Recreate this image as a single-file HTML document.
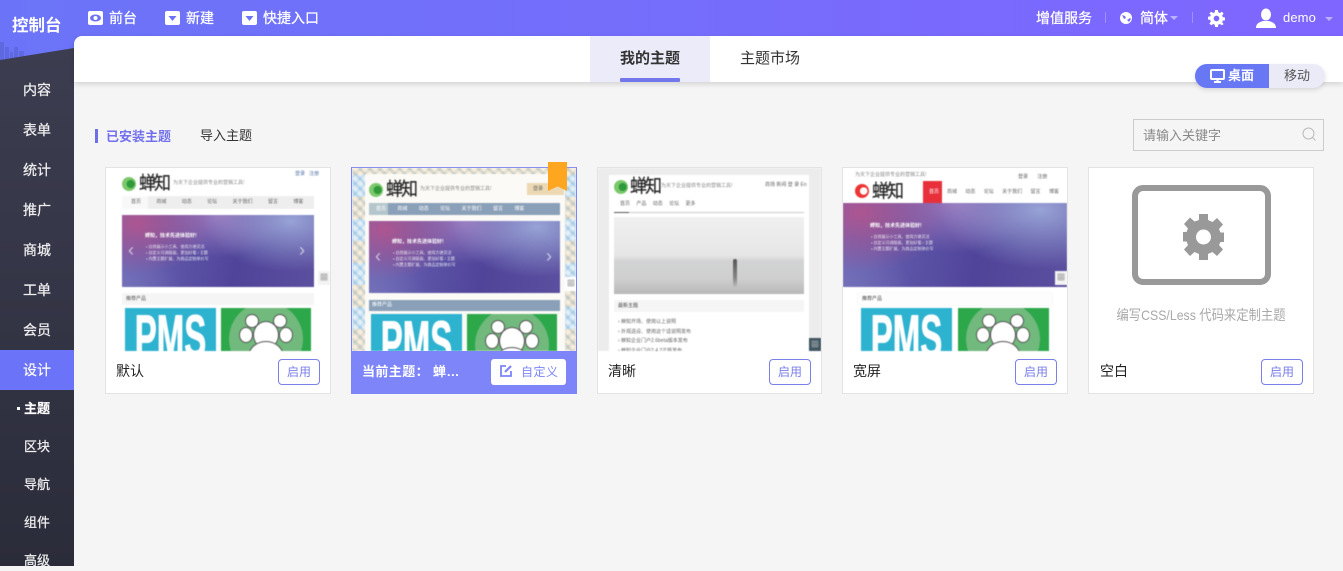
<!DOCTYPE html>
<html lang="zh"><head><meta charset="utf-8"><title>主题</title>
<style>
*{box-sizing:border-box}
html,body{margin:0;padding:0;width:1343px;height:566px;overflow:hidden;background:#f5f5f5;font-family:"Liberation Sans","Noto Sans CJK SC",sans-serif;color:#333}
.a{position:absolute}
.t{position:absolute;white-space:nowrap;line-height:20px}
#top{left:0;top:0;width:1343px;height:62px;background:linear-gradient(90deg,#6b74f8,#7f66ff)}
.tn{color:#fff;font-size:14px;-webkit-text-stroke:.25px #fff}
#side{left:0;top:48px;width:74px;height:518px;background:linear-gradient(180deg,#3c3d50,#2b2c3a);clip-path:polygon(0 12px,74px 0,74px 518px,0 518px)}
.m{position:absolute;left:0;width:74px;text-align:center;color:#eee;font-size:14px;line-height:20px;-webkit-text-stroke:.25px #eee}
.card{position:absolute;top:167px;width:226px;height:227px;background:#fff;border:1px solid #e3e3e3;overflow:hidden}
.shot{position:absolute;left:0;top:0;width:224px;height:183px;overflow:hidden;background:#fff;filter:blur(.5px)}
.name{position:absolute;left:10px;top:193px;font-size:14px;line-height:20px;color:#222}
.btn{position:absolute;left:172px;top:191px;width:42px;height:26px;border:1px solid #7a80e8;border-radius:4px;color:#7a80e8;font-size:12px;text-align:center;line-height:24px}
.s{position:absolute}
.ban{position:absolute;background:radial-gradient(ellipse 38% 70% at 8% 12%,#ad5690 0,rgba(173,86,144,0) 100%),radial-gradient(ellipse 45% 70% at 88% 8%,#98a3d6 0,rgba(152,163,214,0) 100%),radial-gradient(ellipse 36% 60% at 50% 0,#9a78bd 0,rgba(154,120,189,0) 100%),radial-gradient(ellipse 30% 60% at 0 100%,#7470b8 0,rgba(116,112,184,0) 100%),linear-gradient(100deg,#6a66b5,#50449a 60%,#5b4f9f)}
.ban i{position:absolute;font-style:normal;color:#fff;white-space:nowrap;font-size:4px;line-height:6px;opacity:.85}
.ban b{position:absolute;color:#fff;white-space:nowrap;font-size:5px;line-height:6px}
.logo{position:absolute;font-size:17px;color:#222;line-height:18px;white-space:nowrap;letter-spacing:-2px;-webkit-text-stroke:.2px #222;transform-origin:0 50%;transform:scaleY(1.1)}
.lc{position:absolute;width:14px;height:14px;border-radius:50%;background:radial-gradient(circle at 62% 50%,#2f9a3b 0 35%,#7cc86b 38% 100%)}
.sm{position:absolute;font-size:5px;line-height:7px;color:#888;white-space:nowrap}
.pms{position:absolute;background:#2db2cf;overflow:hidden;color:#fff;font-weight:700;font-size:60px;line-height:60px;text-align:center;-webkit-text-stroke:1px #fff}
.pms span{position:absolute;left:-30px;right:-30px;top:-1px;transform:scaleX(.55)}
.gr{position:absolute;background:#2ca84a;overflow:hidden}
.gr u{position:absolute;left:8px;top:-6px;width:74px;height:74px;border-radius:50%;background:#71b97c}
.gr p{position:absolute;margin:0;border-radius:50%;background:#fff;box-shadow:0 0 0 1px #555}
.qr{position:absolute;width:12px;height:14px;background:#f3f3f3;text-align:center;font-size:8px;line-height:14px;color:#555}
</style></head><body>

<div id="top" class="a"></div>
<div class="a" style="left:0;top:42px;width:26px;height:20px;opacity:.5">
<div class="a" style="left:0;top:0;width:4px;height:20px;background:#5560c8"></div><div class="a" style="left:5px;top:5px;width:4px;height:15px;background:#5560c8"></div><div class="a" style="left:10px;top:10px;width:3px;height:10px;background:#5560c8"></div><div class="a" style="left:14px;top:5px;width:4px;height:15px;background:#5560c8"></div><div class="a" style="left:19px;top:9px;width:5px;height:11px;background:#5560c8"></div></div>
<div id="side" class="a"></div>
<div class="t" style="left:12px;top:16px;color:#fff;font-size:16.500px;font-weight:700;width:52px">控制台</div>

<svg class="a" style="left:88px;top:11px" width="15" height="14"><rect width="15" height="14" rx="2" fill="#fff"/><ellipse cx="7.5" cy="7" rx="5.5" ry="3.5" fill="#6f72f8"/><circle cx="7.5" cy="7" r="2" fill="#fff"/></svg>
<div class="t tn" style="left:109px;top:8px">前台</div>
<svg class="a" style="left:165px;top:11px" width="15" height="14"><rect width="15" height="14" rx="2" fill="#fff"/><path d="M3.5 5h8l-4 5z" fill="#6f72f8"/></svg>
<div class="t tn" style="left:186px;top:8px">新建</div>
<svg class="a" style="left:242px;top:11px" width="15" height="14"><rect width="15" height="14" rx="2" fill="#fff"/><path d="M3.5 5h8l-4 5z" fill="#6f72f8"/></svg>
<div class="t tn" style="left:263px;top:8px">快捷入口</div>

<div class="t tn" style="left:1036px;top:8px">增值服务</div>
<div class="a" style="left:1105px;top:12px;width:1px;height:11px;background:#9b94ff"></div>
<svg class="a" style="left:1120px;top:12px" width="12" height="12"><circle cx="6" cy="6" r="6" fill="#fff"/><path d="M2 3l3 1 1 2-2 1zM7 8l3-2 1 1-2 3z" fill="#7a6cfb"/></svg>
<div class="t tn" style="left:1140px;top:8px">简体</div>
<div class="a" style="left:1170px;top:16px;border:4px solid transparent;border-top-color:#b9b3ff"></div>
<div class="a" style="left:1192px;top:12px;width:1px;height:11px;background:#9b94ff"></div>
<svg class="a" style="left:1208px;top:10px" width="17" height="17" viewBox="0 0 24 24"><path fill="#fff" fill-rule="evenodd" d="M10 0h4l.6 3.4 2.2.9L19.6 2.400 22 5l-2 2.800.9 2.200 3.100.6v3.800l-3.100.6-.9 2.200 2 2.800L19.600 21.600l-2.800-1.900-2.200.9L14 24h-4l-.6-3.400-2.200-.9-2.800 1.900L2 19l2-2.800-.9-2.200L0 13.400V9.600l3.100-.6.9-2.200L2 5l2.400-2.600 2.800 1.900 2.200-.9zM12 8a4 4 0 100 8 4 4 0 000-8z"/></svg>
<svg class="a" style="left:1256px;top:8px" width="20" height="20"><ellipse cx="10" cy="6.500" rx="5" ry="6" fill="#fff"/><path d="M0 20c0-5 4-6 7-7h6c3 1 7 2 7 7z" fill="#fff"/></svg>
<div class="t" style="left:1283px;top:8px;color:#fff;font-size:13px;letter-spacing:.1px">demo</div>
<div class="a" style="left:1325px;top:17px;border:4px solid transparent;border-top-color:#b9b3ff"></div>

<div class="a" style="left:74px;top:36px;width:1269px;height:46px;background:#fff;border-top-left-radius:8px;box-shadow:0 2px 6px rgba(0,0,0,.15)"></div>
<div class="a" style="left:590px;top:36px;width:120px;height:46px;background:#ebebf9"></div>
<div class="t" style="left:620px;top:49px;font-size:15px;font-weight:700;color:#333">我的主题</div>
<div class="a" style="left:620px;top:78px;width:60px;height:4px;background:#7277ee;border-radius:1px"></div>
<div class="t" style="left:740px;top:49px;font-size:15px;color:#333">主题市场</div>

<div class="a" style="left:1195px;top:64px;width:130px;height:24px;border-radius:12px;background:#ebebf8;box-shadow:0 2px 5px rgba(0,0,0,.12)"></div>
<div class="a" style="left:1195px;top:64px;width:74px;height:24px;border-radius:12px 0 0 12px;background:#6878f4"></div>
<svg class="a" style="left:1210px;top:69px" width="15" height="14"><rect x="1" y="1" width="13" height="9" rx="1" fill="none" stroke="#fff" stroke-width="2"/><rect x="4" y="12" width="7" height="2" fill="#fff"/><rect x="6.500" y="10" width="2" height="2" fill="#fff"/></svg>
<div class="t" style="left:1228px;top:66px;color:#fff;font-size:13px;font-weight:700">桌面</div>
<div class="t" style="left:1284px;top:66px;color:#555;font-size:13px">移动</div>

<div class="a" style="left:95px;top:129px;width:3px;height:14px;background:#6f6fe8"></div>
<div class="t" style="left:106px;top:127px;color:#7270ec;font-size:13px;font-weight:700">已安装主题</div>
<div class="t" style="left:200px;top:126px;color:#333;font-size:13px">导入主题</div>

<div class="a" style="left:1133px;top:119px;width:191px;height:32px;border:1px solid #ccc;background:#f5f5f5"></div>
<div class="t" style="left:1143px;top:126px;color:#888;font-size:13px">请输入关键字</div>
<svg class="a" style="left:1302px;top:127px" width="15" height="15"><circle cx="6.500" cy="6.500" r="5.500" fill="none" stroke="#bbb"/><path d="M10.500 10.500l3 3" stroke="#bbb"/></svg>

<!-- sidebar -->
<div class="m" style="top:80px">内容</div>
<div class="m" style="top:120px">表单</div>
<div class="m" style="top:160px">统计</div>
<div class="m" style="top:200px">推广</div>
<div class="m" style="top:240px">商城</div>
<div class="m" style="top:280px">工单</div>
<div class="m" style="top:320px">会员</div>
<div class="a" style="left:0;top:350px;width:74px;height:40px;background:#6b74f8"></div>
<div class="m" style="top:360px;color:#fff">设计</div>
<div class="a" style="left:17px;top:407px;width:3px;height:3px;background:#fff"></div>
<div class="m" style="top:399px;color:#fff;font-size:13px;font-weight:700">主题</div>
<div class="m" style="top:437px;font-size:13px">区块</div>
<div class="m" style="top:475px;font-size:13px">导航</div>
<div class="m" style="top:513px;font-size:13px">组件</div>
<div class="m" style="top:551px;font-size:13px">高级</div>

<!-- card 1 -->
<div class="card" style="left:105px"><div class="shot">
<div class="lc" style="left:16px;top:9px"></div><div class="logo" style="left:33px;top:7px">蝉知</div>
<div class="sm" style="left:67px;top:12px">为天下企业提供专业的营销工具!</div>
<div class="sm" style="left:189px;top:3px;color:#5577aa">登录 &nbsp; 注册</div>
<div class="s" style="left:16px;top:28px;width:192px;height:13px;background:#eee"></div>
<div class="s" style="left:16px;top:28px;width:26px;height:13px;background:#f8f8f8"></div>
<div class="sm" style="left:25px;top:31px;word-spacing:14px;color:#666">首页 商城 动态 论坛 关于我们 留言 博客</div>
<div class="ban" style="left:16px;top:47px;width:192px;height:72px"><b style="left:23px;top:18px">蝉知，技术先进体验好!</b><i style="left:24px;top:29px">• 自然展示小工具、使用方便灵活<br>• 自定义可调版面、更加好看 / 主题<br>• 内置主题扩展、为商品定制单价写</i><i style="left:6px;top:26px;font-size:18px;line-height:18px;opacity:.6">‹</i><i style="left:177px;top:26px;font-size:18px;line-height:18px;opacity:.6">›</i></div>
<div class="s" style="left:16px;top:125px;width:192px;height:12px;background:#f5f5f5"></div>
<div class="sm" style="left:20px;top:128px;color:#555">推荐产品</div>
<div class="pms" style="left:19px;top:140px;width:91px;height:43px"><span>PMS</span></div>
<div class="gr" style="left:115px;top:140px;width:90px;height:43px"><u></u><p style="left:25px;top:7px;width:12px;height:12px"></p><p style="left:53px;top:7px;width:12px;height:12px"></p><p style="left:19px;top:20px;width:12px;height:14px"></p><p style="left:59px;top:20px;width:12px;height:14px"></p><p style="left:33px;top:14px;width:24px;height:26px"></p><p style="left:28px;top:34px;width:34px;height:30px"></p></div>
<div class="qr" style="left:212px;top:103px">▦</div>
</div><div class="name">默认</div><div class="btn">启用</div></div>

<!-- card 2 -->
<div class="card" style="left:351px;top:167px;border-color:#7d85f8;border-top-color:#8a90f0"><div class="shot" style="background:repeating-linear-gradient(45deg,rgba(130,180,220,.28) 0 3px,rgba(255,255,255,.3) 3px 7px),repeating-linear-gradient(-45deg,rgba(130,180,220,.22) 0 3px,rgba(255,255,255,.3) 3px 7px),repeating-linear-gradient(0deg,#f4dcb4 0 22px,#c6e0ef 22px 44px)">
<div class="s" style="left:13px;top:6px;width:200px;height:177px;background:#fbfaf6"></div>
<div class="lc" style="left:17px;top:15px"></div><div class="logo" style="left:34px;top:13px">蝉知</div>
<div class="sm" style="left:68px;top:18px">为天下企业提供专业的营销工具!</div>
<div class="s" style="left:175px;top:15px;width:37px;height:12px;background:#ecd9b4"></div>
<div class="sm" style="left:181px;top:18px;color:#666">登录</div>
<div class="s" style="left:17px;top:35px;width:191px;height:12px;background:#8aa0b8"></div>
<div class="s" style="left:17px;top:35px;width:19px;height:12px;background:#b4c6cc"></div>
<div class="sm" style="left:24px;top:38px;word-spacing:10px;color:#fff">首页 商城 动态 论坛 关于我们 留言 博客</div>
<div class="ban" style="left:17px;top:53px;width:191px;height:72px"><b style="left:23px;top:18px">蝉知，技术先进体验好!</b><i style="left:24px;top:29px">• 自然展示小工具、使用方便灵活<br>• 自定义可调版面、更加好看 / 主题<br>• 内置主题扩展、为商品定制单价写</i><i style="left:6px;top:26px;font-size:18px;line-height:18px;opacity:.6">‹</i><i style="left:177px;top:26px;font-size:18px;line-height:18px;opacity:.6">›</i></div>
<div class="s" style="left:17px;top:132px;width:191px;height:11px;background:#8aa0b8"></div>
<div class="sm" style="left:20px;top:134px;color:#fff">推荐产品</div>
<div class="pms" style="left:19px;top:146px;width:91px;height:37px"><span>PMS</span></div>
<div class="gr" style="left:115px;top:146px;width:90px;height:37px"><u></u><p style="left:25px;top:7px;width:12px;height:12px"></p><p style="left:53px;top:7px;width:12px;height:12px"></p><p style="left:19px;top:20px;width:12px;height:14px"></p><p style="left:59px;top:20px;width:12px;height:14px"></p><p style="left:33px;top:14px;width:24px;height:26px"></p><p style="left:28px;top:34px;width:34px;height:30px"></p></div>
<div class="qr" style="left:213px;top:109px;background:#fff">▦</div>
</div>
<div class="s" style="left:0;top:183px;width:224px;height:42px;background:#7d85f8"></div>
<div class="t" style="left:10px;top:194px;color:#fff;font-size:13px;font-weight:700;letter-spacing:.4px">当前主题： 蝉…</div>
<div class="s" style="left:139px;top:191px;width:75px;height:26px;background:#fff;border-radius:3px"></div>
<svg class="s" style="left:148px;top:196px" width="13" height="13"><path d="M11 7v5H1V2h5" fill="none" stroke="#7d85f8" stroke-width="1.800"/><path d="M5 8l6-6" stroke="#7d85f8" stroke-width="2.200"/></svg>
<div class="t" style="left:169px;top:194px;color:#7d85f8;font-size:12px;letter-spacing:.5px">自定义</div>
</div>
<div class="a" style="left:548px;top:162px;width:19px;height:29px;background:#ffa620;clip-path:polygon(0 0,100% 0,100% 100%,50% 84%,0 100%)"></div>

<!-- card 3 -->
<div class="card" style="left:597px;width:225px"><div class="shot" style="background:#ececec;width:223px">
<div class="s" style="left:11px;top:7px;width:200px;height:176px;background:#fff"></div>
<div class="lc" style="left:16px;top:12px"></div><div class="logo" style="left:32px;top:10px">蝉知</div>
<div class="sm" style="left:63px;top:15px">为天下企业提供专业的营销工具!</div>
<div class="sm" style="left:167px;top:14px;color:#666">商场 新闻 登 录 En</div>
<div class="sm" style="left:22px;top:33px;word-spacing:5px;color:#666">首页 产品 动态 论坛 更多</div>
<div class="s" style="left:16px;top:44px;width:190px;height:1px;background:#ccc"></div>
<div class="s" style="left:16px;top:44px;width:15px;height:1px;background:#555"></div>
<div class="s" style="left:16px;top:49px;width:190px;height:77px;background:linear-gradient(180deg,#f0f0f0 0,#e6e6e6 50%,#d2d3d4 57%,#cfcfcf 80%,#b8b8b8 100%)"></div>
<div class="s" style="left:135px;top:91px;width:4px;height:28px;background:linear-gradient(#555,#888 70%,#bbb);border-radius:2px"></div>
<div class="s" style="left:16px;top:132px;width:190px;height:12px;background:#f5f5f5"></div>
<div class="sm" style="left:20px;top:135px;color:#444">最新主题</div>
<div class="sm" style="left:20px;top:150px;line-height:9.500px;color:#666">› 蝉知开场、使用以上说明<br>› 外观选设、使用这个话说明发布<br>› 蝉知企业门户2.6beta版本发布<br>› 蝉知企业门户2.4.2正版发布</div>
<div class="qr" style="left:211px;top:170px;height:13px;background:#3f5560;color:#ddd;line-height:13px">▦</div>
</div><div class="name">清晰</div><div class="btn" style="left:171px">启用</div></div>

<!-- card 4 -->
<div class="card" style="left:842px"><div class="shot">
<div class="sm" style="left:12px;top:4px">为天下企业提供专业的营销工具!</div>
<div class="sm" style="left:175px;top:6px;color:#666;word-spacing:8px">登录 注册</div>
<div class="s" style="left:12px;top:16px;width:14px;height:14px;border-radius:50%;background:radial-gradient(circle at 62% 50%,#fff 0 32%,#e33 35% 100%)"></div><div class="logo" style="left:29px;top:15px">蝉知</div>
<div class="s" style="left:80px;top:13px;width:19px;height:22px;background:#e8303a"></div>
<div class="sm" style="left:86px;top:21px;color:#fff">首页</div>
<div class="sm" style="left:104px;top:21px;word-spacing:7px;color:#666">商城 动态 论坛 关于我们 留言 博客</div>
<div class="ban" style="left:0;top:35px;width:224px;height:84px"><b style="left:27px;top:20px">蝉知，技术先进体验好!</b><i style="left:28px;top:31px">• 自然展示小工具、使用方便灵活<br>• 自定义可调版面、更加好看 / 主题<br>• 内置主题扩展、为商品定制单价写</i></div>
<div class="qr" style="left:212px;top:103px;background:#f3f3f3">▦</div>
<div class="s" style="left:15px;top:125px;width:194px;height:12px;background:#fdfdfd;box-shadow:0 0 1px #ddd"></div>
<div class="sm" style="left:19px;top:128px;color:#444">推荐产品</div>
<div class="pms" style="left:18px;top:140px;width:91px;height:43px"><span>PMS</span></div>
<div class="gr" style="left:115px;top:140px;width:91px;height:43px"><u></u><p style="left:25px;top:7px;width:12px;height:12px"></p><p style="left:53px;top:7px;width:12px;height:12px"></p><p style="left:19px;top:20px;width:12px;height:14px"></p><p style="left:59px;top:20px;width:12px;height:14px"></p><p style="left:33px;top:14px;width:24px;height:26px"></p><p style="left:28px;top:34px;width:34px;height:30px"></p></div>
</div><div class="name">宽屏</div><div class="btn">启用</div></div>

<!-- card 5 -->
<div class="card" style="left:1088px">
<div class="s" style="left:43px;top:17px;width:139px;height:100px;border:6px solid #999;border-radius:11px"></div>
<svg class="s" style="left:94px;top:45px" width="41" height="47" viewBox="0 0 41 47"><path fill="#999" fill-rule="evenodd" d="M16 1h9v6l4.500 2 4.500-4 6 6.500-4 4.500 1.500 3.500h3.500v9.500h-3.500L36 32l4 4.500-6 6.500-4.500-4-4.500 2v6h-9v-6l-4.500-2-4.500 4-6-6.500 4-4.500L3.500 28.500H0V19h3.500L5 15.500 1 11 7 4.500l4.500 4L16 7zM20.500 16.500a7.500 7.500 0 100 15 7.500 7.500 0 000-15z"/></svg>
<div class="t" style="left:0;width:224px;text-align:center;top:137px;color:#a9a9a9;font-size:14px;transform:scaleX(.88)">编写CSS/Less 代码来定制主题</div>
<div class="name" style="left:11px">空白</div><div class="btn">启用</div></div>

</body></html>
